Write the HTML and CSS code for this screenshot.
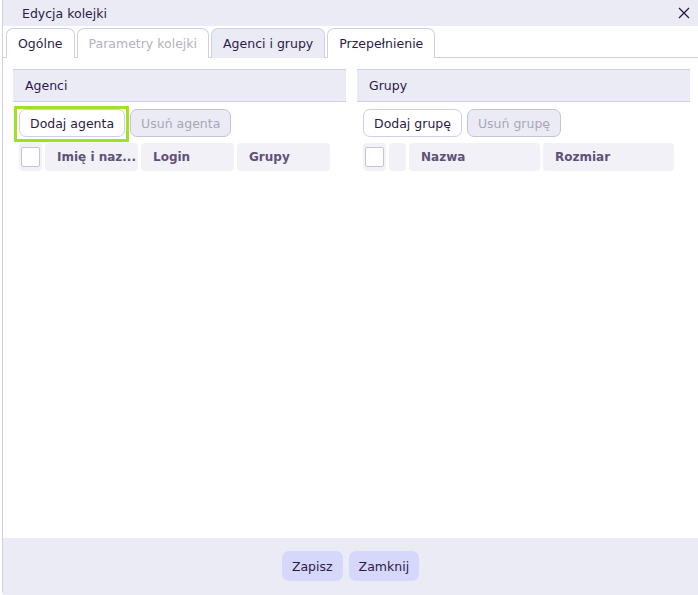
FILE: index.html
```html
<!DOCTYPE html>
<html lang="pl">
<head>
<meta charset="utf-8">
<title>Edycja kolejki</title>
<link rel="stylesheet" href="styles.css">
</head>
<body>
<div class="dialog">
  <div class="titlebar">
    <span class="title">Edycja kolejki</span>
    <button class="close" aria-label="Zamknij">
      <svg width="12" height="12" viewBox="0 0 12 12"><path d="M1 1 L11 11 M11 1 L1 11" stroke="#2b1a47" stroke-width="1.3" fill="none"/></svg>
    </button>
  </div>
  <div class="tabs">
    <div class="tab">Ogólne</div>
    <div class="tab disabled">Parametry kolejki</div>
    <div class="tab selected">Agenci i grupy</div>
    <div class="tab">Przepełnienie</div>
  </div>
  <div class="content">
    <div class="panel">
      <div class="panel-header">Agenci</div>
      <div class="toolbar">
        <button class="btn focused">Dodaj agenta</button>
        <button class="btn off">Usuń agenta</button>
      </div>
      <div class="thead">
        <div class="cell check"><span class="box"></span></div>
        <div class="cell w93">Imię i naz...</div>
        <div class="cell w93">Login</div>
        <div class="cell w93">Grupy</div>
      </div>
    </div>
    <div class="panel">
      <div class="panel-header">Grupy</div>
      <div class="toolbar">
        <button class="btn">Dodaj grupę</button>
        <button class="btn off">Usuń grupę</button>
      </div>
      <div class="thead">
        <div class="cell check"><span class="box"></span></div>
        <div class="cell narrow"></div>
        <div class="cell w131">Nazwa</div>
        <div class="cell w131">Rozmiar</div>
      </div>
    </div>
  </div>
  <div class="footer">
    <button class="fbtn">Zapisz</button>
    <button class="fbtn">Zamknij</button>
  </div>
</div>
</body>
</html>
```
FILE: styles.css
```css
* { box-sizing: border-box; }
html, body { margin: 0; padding: 0; background: #fff; }
body {
  font-family: "DejaVu Sans", "Noto Sans", sans-serif;
  font-size: 12px;
  color: #2b1a47;
}
.dialog {
  margin-left: 2px;
  width: 696px;
  height: 595px;
  border-left: 1px solid #cfcfe6;
  border-bottom-left-radius: 4px;
  display: flex;
  flex-direction: column;
  background: #fff;
}
.titlebar {
  height: 26px;
  background: #ebebf6;
  display: flex;
  align-items: center;
  justify-content: space-between;
  padding: 0 7px 0 19px;
  font-size: 12.5px;
}
.close {
  border: 0;
  background: transparent;
  padding: 0;
  width: 14px;
  height: 14px;
  display: flex;
  align-items: center;
  justify-content: center;
}
.tabs {
  display: flex;
  gap: 2px;
  padding: 2px 0 0 3px;
  border-bottom: 1px solid #cfcfe6;
  height: 32px;
}
.tab {
  height: 30px;
  padding: 0 11px;
  display: flex;
  align-items: center;
  border: 1px solid #cfcfe6;
  border-bottom: 0;
  border-radius: 7px 7px 0 0;
  background: #fff;
  font-size: 12.5px;
}
.tab.disabled { color: #b5b1c0; }
.tab.selected { background: #ebebf6; }
.content {
  flex: 1;
  display: flex;
  gap: 11px;
  padding: 11px 8px 0 10px;
}
.panel { flex: 1; }
.panel-header {
  height: 33px;
  background: #ebebf6;
  border-top: 1px solid #cfcfe6;
  border-bottom: 1px solid #cfcfe6;
  display: flex;
  align-items: center;
  padding-left: 12px;
  font-size: 12.5px;
}
.toolbar {
  display: flex;
  gap: 5px;
  padding: 7px 0 0 6px;
}
.btn {
  font: inherit;
  font-size: 12.5px;
  height: 28px;
  padding: 0 10px;
  border: 1px solid #cfcfe6;
  border-radius: 7px;
  background: #fff;
  color: #2b1a47;
}
.btn.off {
  background: #ebebf6;
  border-color: #c6c4d4;
  color: #aaa5b8;
}
.btn.focused {
  position: relative;
  outline: none;
}
.btn.focused::after {
  content: "";
  position: absolute;
  top: -4px;
  bottom: -6px;
  left: -6px;
  right: -5px;
  border: 3px solid #9fe320;
  pointer-events: none;
}
.thead {
  display: flex;
  gap: 3px;
  margin: 6px 0 0 6px;
  height: 28px;
}
.cell {
  background: #f2f1f8;
  border-radius: 4px;
  display: flex;
  align-items: center;
  padding-left: 12px;
  font-weight: bold;
  color: #5f5277;
  font-size: 12px;
  white-space: nowrap;
  overflow: hidden;
}
.cell.check { width: 23px; padding: 0; justify-content: center; }
.cell.narrow { width: 17px; padding: 0; }
.cell.w93 { width: 93px; }
.cell.w131 { width: 131px; }
.box {
  width: 19px;
  height: 20px;
  background: #fff;
  border: 1px solid #c4c3d8;
  border-radius: 2px;
}
.footer {
  height: 57px;
  background: #ebebf6;
  display: flex;
  align-items: center;
  justify-content: center;
  gap: 6px;
  padding-bottom: 1px;
}
.fbtn {
  font: inherit;
  font-size: 12.5px;
  height: 30px;
  padding: 0 10px;
  border: 0;
  border-radius: 7px;
  background: #d6d8fb;
  color: #2b1a47;
}
```
